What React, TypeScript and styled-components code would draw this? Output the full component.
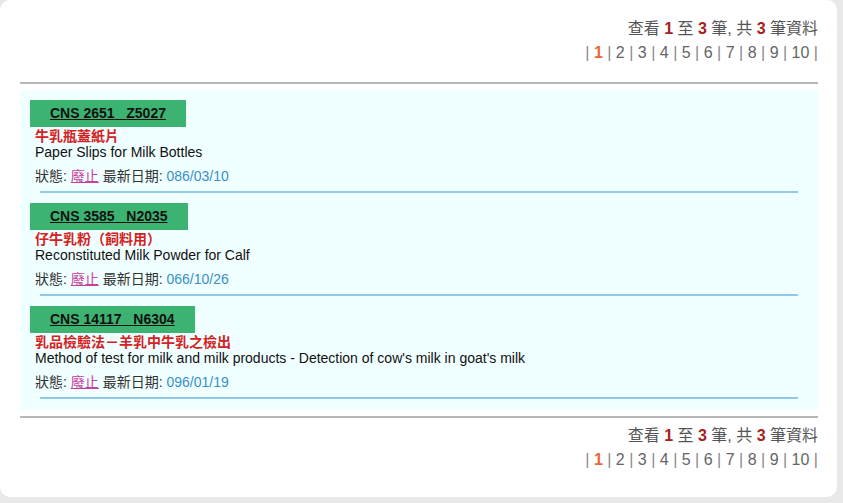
import React from "react";
import styled, { createGlobalStyle } from "styled-components";

interface Standard {
  no: string;
  code: string;
  zh: string;
  en: string;
  status: string;
  date: string;
}

const standards: Standard[] = [
  {
    no: "CNS 2651",
    code: "Z5027",
    zh: "牛乳瓶蓋紙片",
    en: "Paper Slips for Milk Bottles",
    status: "廢止",
    date: "086/03/10",
  },
  {
    no: "CNS 3585",
    code: "N2035",
    zh: "仔牛乳粉（飼料用）",
    en: "Reconstituted Milk Powder for Calf",
    status: "廢止",
    date: "066/10/26",
  },
  {
    no: "CNS 14117",
    code: "N6304",
    zh: "乳品檢驗法－羊乳中牛乳之檢出",
    en: "Method of test for milk and milk products - Detection of cow's milk in goat's milk",
    status: "廢止",
    date: "096/01/19",
  },
];

const pages = [1, 2, 3, 4, 5, 6, 7, 8, 9, 10];

const Pager: React.FC<{ current: number }> = ({ current }) => (
  <PagerBlock>
    <Summary>
      查看 <Num>1</Num> 至 <Num>3</Num> 筆, 共 <Num>3</Num> 筆資料
    </Summary>
    <PageLinks>
      <Sep>|</Sep>
      {pages.map((p) => (
        <React.Fragment key={p}>
          {" "}
          <PageLink active={p === current}>{p}</PageLink> <Sep>|</Sep>
        </React.Fragment>
      ))}
    </PageLinks>
  </PagerBlock>
);

const App: React.FC = () => {
  return (
    <>
      <GlobalStyle />
      <Panel>
        <Pager current={1} />
        <Rule />
        <ResultBox>
          {standards.map((s) => (
            <Item key={s.no}>
              <Badge>
                <BadgeLink>
                  {s.no}
                  {"\u00a0\u00a0\u00a0"}
                  {s.code}
                </BadgeLink>
              </Badge>
              <ZhTitle>{s.zh}</ZhTitle>
              <EnTitle>{s.en}</EnTitle>
              <StatusLine>
                狀態: <StatusLink>{s.status}</StatusLink> 最新日期:{" "}
                <DateText>{s.date}</DateText>
              </StatusLine>
              <ItemRule />
            </Item>
          ))}
        </ResultBox>
        <Rule />
        <Pager current={1} />
      </Panel>
    </>
  );
};

export default App;

const GlobalStyle = createGlobalStyle`
  html, body {
    margin: 0;
    padding: 0;
    background: #e8e8e8;
  }
  body {
    font-family: "Liberation Sans", "Noto Sans CJK TC", Arial, sans-serif;
  }
`;

const Panel = styled.div`
  width: 837px;
  height: 497px;
  box-sizing: border-box;
  background: #fff;
  border-radius: 10px;
  padding: 17px 19px 0 20px;
`;

const PagerBlock = styled.div`
  text-align: right;
  font-size: 16px;
  line-height: 24px;
  color: #555;
`;

const Summary = styled.div``;

const Num = styled.b`
  color: #a52222;
`;

const PageLinks = styled.div`
  color: #666;
`;

const Sep = styled.span`
  color: #888;
`;

const PageLink = styled.span<{ active?: boolean }>`
  color: ${({ active }) => (active ? "#e8653a" : "#666")};
  font-weight: ${({ active }) => (active ? "bold" : "normal")};
`;

const Rule = styled.div`
  height: 2px;
  background: #b5b9bc;
  margin: 17px 0 6px;

  & + ${PagerBlock} {
    margin-top: 5px;
  }
`;

const ResultBox = styled.div`
  background: #f0ffff;
  padding: 0 0 11px 10px;
  margin-right: -1px;
  & + ${Rule} {
    margin-top: 6px;
  }
`;

const Item = styled.div`
  padding-top: 10px;
  display: flex;
  flex-direction: column;
  align-items: flex-start;
`;

const Badge = styled.div`
  background: #3cb371;
  padding: 5px 20px;
  line-height: 17px;
  font-size: 14px;
  font-weight: bold;
  margin-bottom: 1px;
`;

const BadgeLink = styled.span`
  color: #111;
  text-decoration: underline;
  white-space: nowrap;
`;

const ZhTitle = styled.div`
  color: #d42121;
  font-weight: bold;
  font-size: 14px;
  line-height: 16px;
  padding-left: 5px;
`;

const EnTitle = styled.div`
  color: #111;
  font-size: 14px;
  line-height: 16px;
  padding-left: 5px;
`;

const StatusLine = styled.div`
  color: #333;
  font-size: 14px;
  line-height: 16px;
  margin-top: 8px;
  padding-left: 5px;
`;

const StatusLink = styled.span`
  color: #c8409c;
  text-decoration: underline;
`;

const DateText = styled.span`
  color: #3a8fc9;
`;

const ItemRule = styled.div`
  align-self: stretch;
  height: 2px;
  background: #8ecae6;
  margin: 7px 21px 0 10px;
`;
